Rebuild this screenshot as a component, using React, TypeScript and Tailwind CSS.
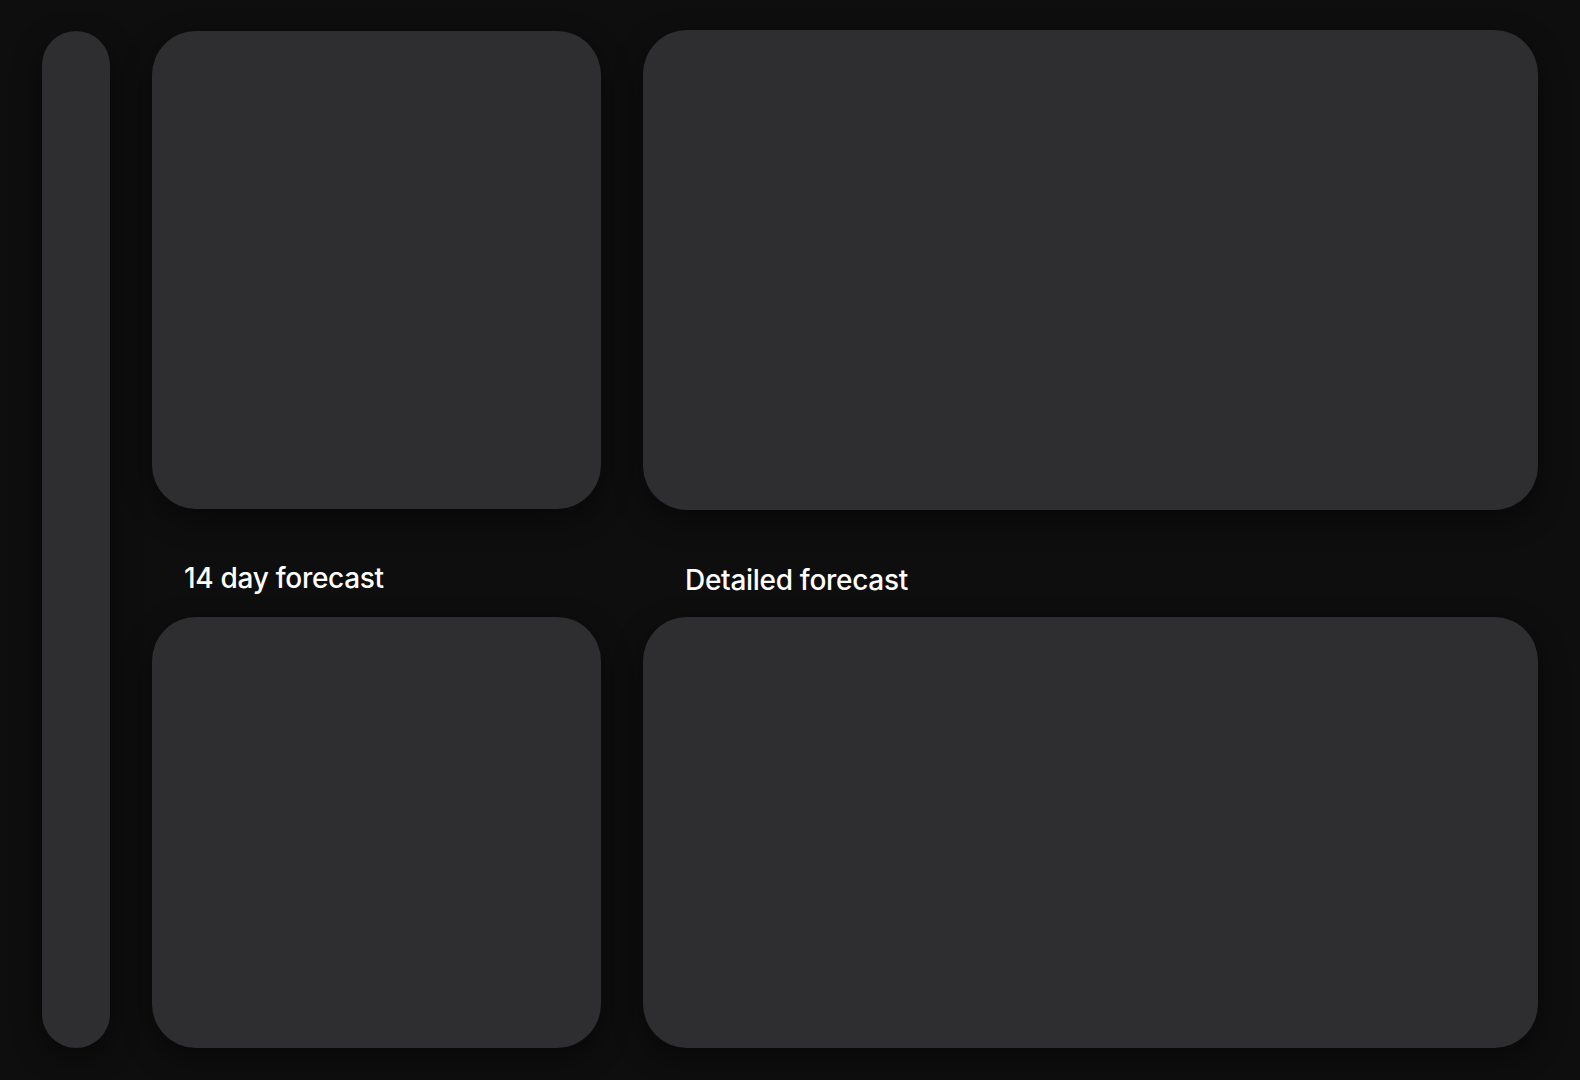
export default function App() {
  return (
    <div className="flex h-[1080px] w-[1580px] gap-[42px] overflow-hidden bg-[#0e0e0e] pl-[42px] pt-[31px] font-['Inter',sans-serif] text-white">
      <aside className="h-[1017px] w-[68px] rounded-full bg-[#2e2d2f] shadow-[0_10px_30px_rgba(0,0,0,0.45)]" />
      <div className="flex w-[449px] flex-col">
        <div className="h-[478px] rounded-[44px] bg-[#2e2d2f] shadow-[0_10px_30px_rgba(0,0,0,0.45)]" />
        <div className="flex h-[108px] items-center pl-[32px] pt-[30px]">
          <h2 className="text-[28px] font-medium tracking-[-0.3px]">14 day forecast</h2>
        </div>
        <div className="h-[431px] rounded-[44px] bg-[#2e2d2f] shadow-[0_10px_30px_rgba(0,0,0,0.45)]" />
      </div>
      <div className="-mt-px flex w-[895px] flex-col">
        <div className="h-[480px] rounded-[44px] bg-[#2e2d2f] shadow-[0_10px_30px_rgba(0,0,0,0.45)]" />
        <div className="flex h-[107px] items-center pl-[42px] pt-[32px]">
          <h2 className="text-[28px] font-medium tracking-[-0.3px]">Detailed forecast</h2>
        </div>
        <div className="h-[431px] rounded-[44px] bg-[#2e2d2f] shadow-[0_10px_30px_rgba(0,0,0,0.45)]" />
      </div>
    </div>
  );
}
